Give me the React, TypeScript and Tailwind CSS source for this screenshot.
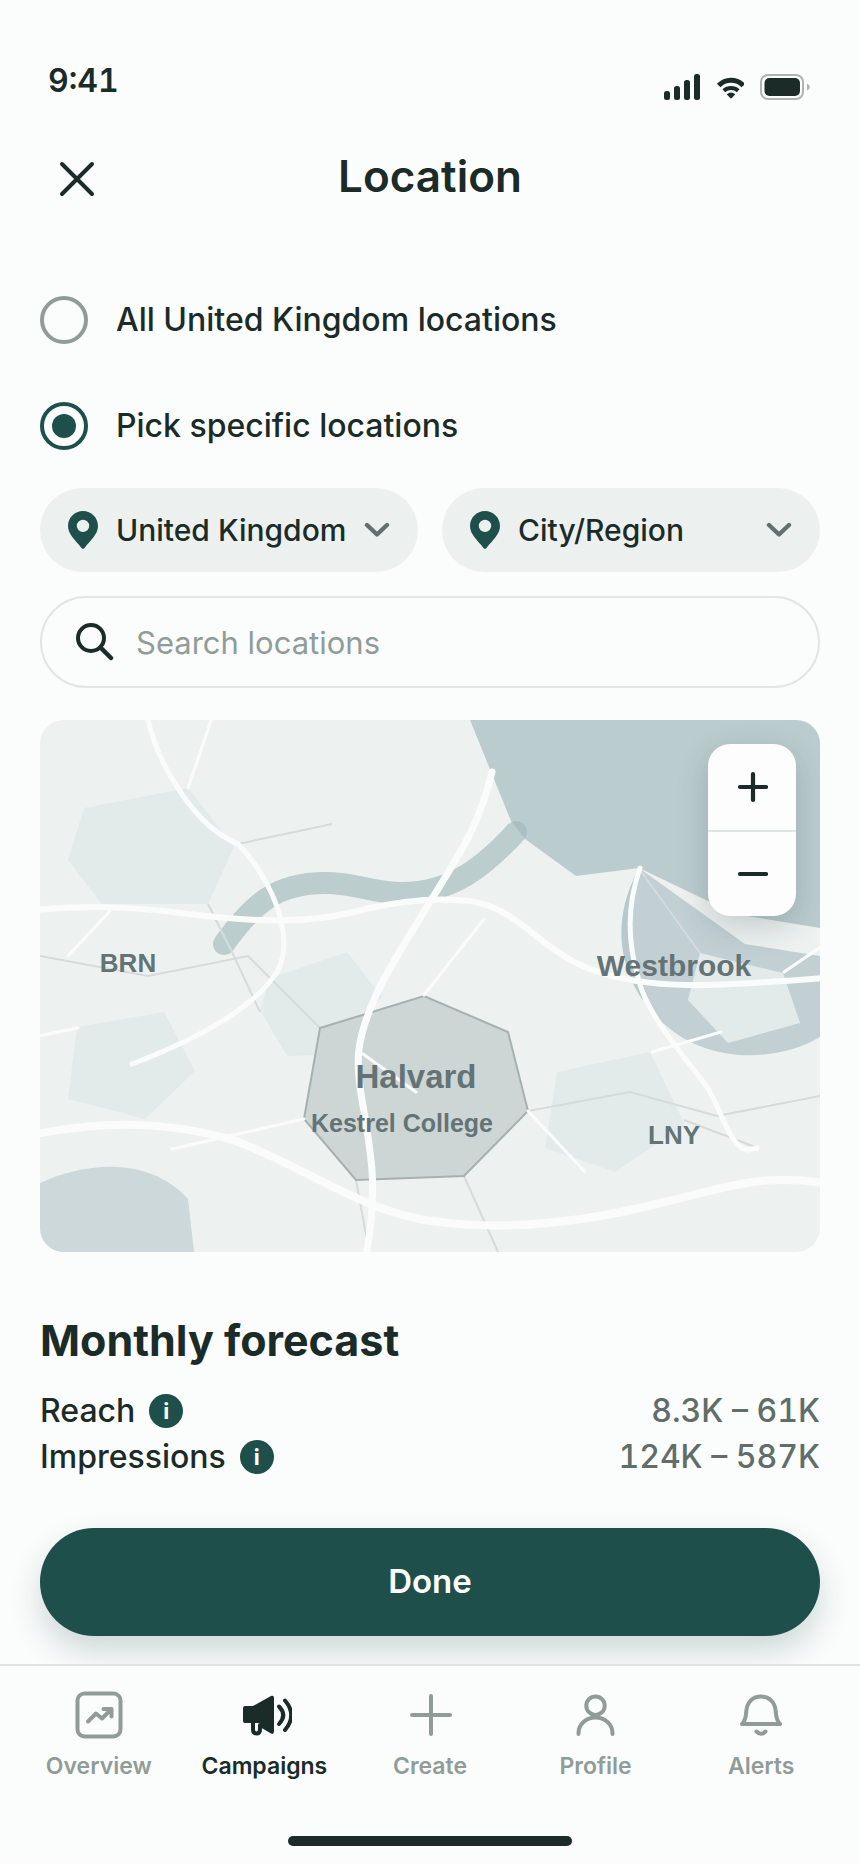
import clsx from "clsx";
import React, { useState } from "react";

const StatusBar = () => (
  <div className="flex items-end justify-between pt-[62px] pr-[50px] pl-12">
    <span className="text-[32px] leading-[38px] font-semibold tabular-nums">
      9:41
    </span>
    <div className="flex gap-4">
      <svg width="36" height="26" viewBox="0 0 36 26" fill="currentColor">
        <rect x="0" y="17" width="6" height="9" rx="2.5" />
        <rect x="10" y="12" width="6" height="14" rx="2.5" />
        <rect x="20" y="6" width="6" height="20" rx="2.5" />
        <rect x="30" y="0" width="6" height="26" rx="2.5" />
      </svg>
      <svg width="28" height="26" viewBox="0 0 28 26" fill="none">
        <path
          d="M2.7 11.600A17 17 0 0 1 27.300 11.600"
          stroke="currentColor"
          strokeWidth="5"
        />
        <path
          d="M7.800 16.800A11 11 0 0 1 22.200 16.800"
          stroke="currentColor"
          strokeWidth="4"
        />
        <path
          d="M10.700 20.300Q15 16.600 19.300 20.300L15.800 24Q15 24.800 14.200 24Z"
          fill="currentColor"
        />
      </svg>
      <svg width="50" height="26" viewBox="0 0 50 26" fill="none">
        <rect
          x="1"
          y="1"
          width="42"
          height="24"
          rx="7"
          stroke="#adb4b2"
          strokeWidth="2"
        />
        <rect x="4.5" y="4" width="35.5" height="18" rx="5" fill="currentColor" />
        <path d="M47 9.5Q49.8 11 49.8 13T47 16.5Z" fill="#adb4b2" />
      </svg>
    </div>
  </div>
);

const RadioOption = ({
  label,
  checked,
  onChange,
}: {
  label: string;
  checked: boolean;
  onChange: () => void;
}) => (
  <label className="flex items-center gap-7">
    <input
      type="radio"
      name="scope"
      checked={checked}
      onChange={onChange}
      className="size-12 shrink-0 appearance-none rounded-full border-4 border-[#919c99] bg-clip-content p-2 checked:border-[#1f4f4a] checked:bg-[#1f4f4a]"
    />
    <span className="text-[32px] leading-10 font-medium">{label}</span>
  </label>
);

const PlaceSelect = ({ name, options }: { name: string; options: string[] }) => (
  <div className="flex h-[84px] items-center rounded-full bg-[#ecf1f0] px-7">
    <svg width="30" height="38" viewBox="0 0 30 38" className="shrink-0">
      <path
        d="M15 0C6.700 0 0 6.700 0 15C0 23.500 7.500 29 13.500 37Q15 38.700 16.500 37C22.500 29 30 23.500 30 15C30 6.700 23.300 0 15 0ZM15 8.700A6.200 6.200 0 1 1 15 21.100A6.200 6.200 0 1 1 15 8.700Z"
        fill="#1f4f4a"
        fillRule="evenodd"
      />
    </svg>
    <select
      aria-label={name}
      className="ml-[18px] h-full min-w-0 flex-1 appearance-none bg-transparent text-[30px] font-medium outline-none"
    >
      {options.map((option) => (
        <option key={option}>{option}</option>
      ))}
    </select>
    <svg
      width="26"
      height="16"
      viewBox="0 0 26 16"
      fill="none"
      className="pointer-events-none shrink-0"
    >
      <path
        d="M3 3L13 12.500L23 3"
        stroke="#64706d"
        strokeWidth="4.400"
        strokeLinecap="round"
        strokeLinejoin="round"
      />
    </svg>
  </div>
);

const MapDrawing = () => (
  <svg viewBox="0 0 780 532" className="block w-full" fill="none">
    <rect width="780" height="532" fill="#edf2f1" />

    {/* water */}
    <path
      d="M430 0L471 101L485 119L536 156L599 148L695 194L780 208V0Z"
      fill="#bbcccf"
    />
    <path
      d="M599 148L705 224L780 236V317C742 340 672 347 624 304C580 264 573 197 599 148Z"
      fill="#c2d0d4"
    />
    <path
      d="M599 148C573 197 577 240 603 281L597 257C585 215 588 180 599 148Z"
      fill="#b7c9cc"
    />
    <path d="M0 463C48 441 110 437 148 479L154 532H0Z" fill="#ccd8da" />
    <path
      d="M184 224C213 184 236 163 285 163C318 163 330 173 362 173C412 173 445 146 476 112"
      stroke="#9fb8ba"
      strokeOpacity=".65"
      strokeWidth="22"
      strokeLinecap="round"
    />

    {/* districts */}
    <g fill="#e3eaea">
      <path d="M44 88L148 68L194 127L168 184H62L28 140Z" />
      <path d="M230 258L307 232L342 277L280 335L247 336L220 290Z" />
      <path d="M37 307L124 292L155 351L105 399L28 379Z" />
      <path d="M517 352L610 332L645 405L575 452L505 428Z" />
      <path d="M660 233L743 253L760 303L688 323L648 280Z" />
    </g>

    {/* minor streets */}
    <g stroke="#d4dbda" strokeWidth="2">
      <path d="M198 124L292 104" />
      <path d="M0 236L108 256L208 236L232 260L280 308" />
      <path d="M168 184L192 232L220 292" />
      <path d="M488 391L590 372L677 396L780 376" />
      <path d="M644 400L718 428" />
      <path d="M424 456L458 532" />
      <path d="M316 460L327 520" />
      <path d="M600 150L660 233" />
    </g>

    <path
      d="M280 308L384 276L468 312L488 391L424 456L316 460L264 399Z"
      fill="#cdd6d5"
      stroke="#a6b0af"
      strokeWidth="2"
    />

    {/* roads */}
    <g stroke="#fafcfc" strokeLinecap="round" strokeLinejoin="round">
      <path
        d="M108 0C118 44 154 106 198 124C216 142 232 170 238 190C246 215 246 236 237 252C214 288 160 318 92 344"
        strokeWidth="5"
      />
      <path
        d="M-4 190C55 184 105 188 157 195C205 200 265 207 330 188C370 179 404 178 430 181C480 189 497 228 550 249C610 272 680 266 784 258"
        strokeWidth="6"
      />
      <path
        d="M452 52C440 105 417 138 390 182C370 215 350 245 337 273C314 323 316 345 322 380C332 437 338 470 326 536"
        strokeWidth="7"
      />
      <path
        d="M-4 414C60 402 120 400 190 419C260 443 322 494 400 502C470 511 550 501 625 482C690 466 722 454 784 463"
        strokeWidth="8"
      />
      <path
        d="M600 148C588 182 587 220 598 257C605 293 645 337 667 367C681 389 690 428 708 430L717 428"
        strokeWidth="5"
      />
      <g strokeWidth="3">
        <path d="M172 -2L148 68" />
        <path d="M70 191L28 236" />
        <path d="M-2 316L38 308" />
        <path d="M264 399L132 429" />
        <path d="M323 334L376 372" />
        <path d="M444 199L384 275" />
        <path d="M488 391L545 452" />
        <path d="M612 332L681 312" />
        <path d="M744 252L782 226" />
      </g>
    </g>

    <g
      fill="#647476"
      fontFamily="'Liberation Sans', Arial, sans-serif"
      fontWeight="700"
      textAnchor="middle"
    >
      <text x="88" y="252" fontSize="26">
        BRN
      </text>
      <text x="634" y="256" fontSize="30">
        Westbrook
      </text>
      <text x="376" y="368" fontSize="33">
        Halvard
      </text>
      <text x="362" y="412" fontSize="25">
        Kestrel College
      </text>
      <text x="634" y="424" fontSize="26">
        LNY
      </text>
    </g>
  </svg>
);

const LocationMap = () => (
  <div className="relative mt-8 overflow-hidden rounded-3xl">
    <MapDrawing />
    <div className="absolute top-6 right-6 w-[88px] rounded-[22px] bg-[#fdfdfd] shadow-[0_10px_32px_rgba(27,43,40,0.2)]">
      <button
        aria-label="Zoom in"
        className="flex h-[86px] w-full items-center justify-center"
      >
        <svg width="32" height="32" viewBox="0 0 32 32">
          <path
            d="M17 3V29M4 16H30"
            stroke="currentColor"
            strokeWidth="4.200"
            strokeLinecap="round"
          />
        </svg>
      </button>
      <button
        aria-label="Zoom out"
        className="flex h-[86px] w-full items-center justify-center border-t-2 border-[#e0e5e4]"
      >
        <svg width="32" height="32" viewBox="0 0 32 32">
          <path
            d="M4 16H30"
            stroke="currentColor"
            strokeWidth="4.200"
            strokeLinecap="round"
          />
        </svg>
      </button>
    </div>
  </div>
);

const ForecastRow = ({ label, value }: { label: string; value: string }) => (
  <div className="flex h-[46px] items-center text-[32px] leading-10 font-medium">
    <dt className="flex items-center gap-3.5">
      {label}
      <button
        aria-label={`About ${label.toLowerCase()}`}
        className="flex size-[34px] items-center justify-center rounded-full bg-[#1f4f4a] text-[22px] leading-6 font-bold text-white"
      >
        i
      </button>
    </dt>
    <dd className="ml-auto text-[#606d69] tabular-nums">{value}</dd>
  </div>
);

const tabs = [
  {
    label: "Overview",
    icon: (
      <>
        <rect x="2.500" y="2.500" width="43" height="43" rx="7" />
        <path d="M13 30.500L21 22.500L27 27.500L36 18.500M28.500 18H36.500V25.500" />
      </>
    ),
  },
  {
    label: "Campaigns",
    icon: (
      <>
        <path
          d="M5 15H13L31 5Q34 4 34 7V40Q34 44 31 42.500L20 36V32H5Q3 32 3 30V17Q3 15 5 15Z"
          fill="currentColor"
          stroke="none"
        />
        <path d="M13 32V38.500Q13 42.500 16.500 42.500T20 38.500V34" />
        <path d="M39 15.500Q47.500 24 39 33" />
        <path d="M45 9.500Q57.500 24 45 39" />
      </>
    ),
  },
  { label: "Create", icon: <path d="M25 5V43M6 24H44" /> },
  {
    label: "Profile",
    icon: (
      <>
        <circle cx="23.500" cy="14.700" r="9.200" />
        <path d="M6.500 43V42A17 15.500 0 0 1 40.500 42V43" />
      </>
    ),
  },
  {
    label: "Alerts",
    icon: (
      <>
        <path d="M5 33C8 30 9 26 9.300 20C10 11 16 5.500 24 5.500S38 11 38.700 20C39 26 40 30 43 33Z" />
        <path d="M19.500 40.500Q24 45 28.500 40.500" />
      </>
    ),
  },
];

const TabBar = () => {
  const [active, setActive] = useState("Campaigns");

  return (
    <nav className="relative border-t-2 border-[#e0e5e4] bg-[#fbfcfc] px-4 pt-[25px] pb-[18px]">
      <div className="grid grid-cols-5">
        {tabs.map((tab) => (
          <button
            key={tab.label}
            onClick={() => setActive(tab.label)}
            className={clsx(
              "flex flex-col items-center gap-[13px]",
              active === tab.label ? "text-[#1b2b28]" : "text-[#919c99]"
            )}
          >
            <svg
              width="56"
              height="48"
              viewBox="-4 0 56 48"
              fill="none"
              stroke="currentColor"
              strokeWidth="4"
              strokeLinecap="round"
              strokeLinejoin="round"
            >
              {tab.icon}
            </svg>
            <span className="text-[23px] leading-7 font-semibold">
              {tab.label}
            </span>
          </button>
        ))}
      </div>
      <div className="mx-auto mt-14 h-2.5 w-[284px] rounded-full bg-[#1b2b28]" />
    </nav>
  );
};

export default function App() {
  const [scope, setScope] = useState("specific");
  const [query, setQuery] = useState("");

  return (
    <div className="min-h-screen bg-[#fbfcfc] font-[Inter,sans-serif] text-[#1b2b28]">
      <StatusBar />

      <header className="mt-[52px] grid grid-cols-[42px_1fr_42px] items-end px-14">
        <button
          aria-label="Close"
          className="flex size-[42px] items-center justify-center"
        >
          <svg width="36" height="36" viewBox="0 0 36 36">
            <path
              d="M3 3L33 33M33 3L3 33"
              stroke="currentColor"
              strokeWidth="4"
              strokeLinecap="round"
            />
          </svg>
        </button>
        <h1 className="text-center text-[44px] leading-[48px] font-semibold">
          Location
        </h1>
      </header>

      <main className="px-10 pt-24 pb-7">
        <div className="flex flex-col gap-[58px]">
          <RadioOption
            label="All United Kingdom locations"
            checked={scope === "all"}
            onChange={() => setScope("all")}
          />
          <RadioOption
            label="Pick specific locations"
            checked={scope === "specific"}
            onChange={() => setScope("specific")}
          />
        </div>

        <div className="mt-[38px] grid grid-cols-2 gap-6">
          <PlaceSelect name="Country" options={["United Kingdom"]} />
          <PlaceSelect name="City or region" options={["City/Region"]} />
        </div>

        <label className="mt-6 flex h-[92px] items-center gap-[22px] rounded-full border-2 border-[#e0e6e5] px-[34px]">
          <svg
            width="38"
            height="38"
            viewBox="0 0 38 38"
            fill="none"
            className="shrink-0"
          >
            <circle cx="15" cy="15" r="13" stroke="currentColor" strokeWidth="4" />
            <path
              d="M25 25L35 35"
              stroke="currentColor"
              strokeWidth="4.500"
              strokeLinecap="round"
            />
          </svg>
          <input
            type="text"
            aria-label="Search locations"
            placeholder="Search locations"
            value={query}
            onChange={(e) => setQuery(e.target.value)}
            className="h-full min-w-0 flex-1 bg-transparent text-[31px] outline-none placeholder:text-[#919c99]"
          />
        </label>

        <LocationMap />

        <h2 className="mt-[62px] text-[43px] leading-[52px] font-bold">
          Monthly forecast
        </h2>
        <dl className="mt-[22px]">
          <ForecastRow label="Reach" value="8.3K – 61K" />
          <ForecastRow label="Impressions" value="124K – 587K" />
        </dl>

        <button className="mt-12 h-[108px] w-full rounded-full bg-[#1f4f4a] text-[33px] font-semibold text-white shadow-[0_16px_32px_rgba(31,79,74,0.2)]">
          Done
        </button>
      </main>

      <TabBar />
    </div>
  );
}
